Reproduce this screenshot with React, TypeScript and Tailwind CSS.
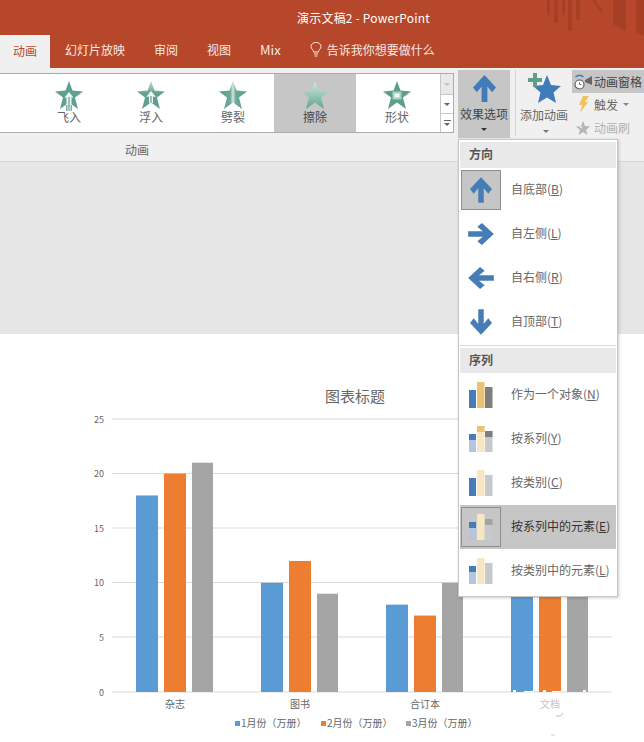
import React from "react";

const FONT = '"Noto Sans CJK SC", "Liberation Sans", sans-serif';
const STAR = "14,0 17.5,9.5 28,10.5 20,16.5 23,28 14,21.5 5,28 8,16.5 0,10.5 10.5,9.5";

function StarBase({ children }: { children?: React.ReactNode }) {
  return (
    <svg width="28" height="31" viewBox="0 0 28 31" className="block -mb-[2px]">
      {children}
    </svg>
  );
}

function StarFly() {
  return (
    <StarBase>
      <polygon points={STAR} fill="#5fa08e" />
      <path d="M14 11 L18.5 16.5 L16.5 16.5 L16.5 24 L11.5 24 L11.5 16.5 L9.5 16.5 Z" fill="#eef6f3" />
      <path d="M13.4 16 h1.2 v9 h-1.2z" fill="#5fa08e" />
      <path d="M11 24 h1.5 v6 h-1.5z M13.2 24 h1.5 v6 h-1.5z M15.5 24 h1.5 v6 h-1.5z" fill="#7fb3a4" />
    </StarBase>
  );
}
function StarFloat() {
  return (
    <StarBase>
      <defs>
        <linearGradient id="fl" x1="0" y1="0" x2="0" y2="1">
          <stop offset="0" stopColor="#c3dcd5" />
          <stop offset="0.45" stopColor="#62a190" />
          <stop offset="1" stopColor="#5d9e8c" />
        </linearGradient>
      </defs>
      <polygon points={STAR} fill="url(#fl)" />
      <path d="M14 10 L19 16 L16 15.5 L16 22 L12 22 L12 15.5 L9 16 Z" fill="#eef6f3" />
      <path d="M13.4 15 h1.2 v7 h-1.2z" fill="#5fa08e" />
    </StarBase>
  );
}
function StarSplit() {
  return (
    <StarBase>
      <defs>
        <linearGradient id="sp" x1="0" y1="0" x2="1" y2="0">
          <stop offset="0" stopColor="#5a9b89" />
          <stop offset="0.4" stopColor="#6ea898" />
          <stop offset="0.5" stopColor="#d4e6e1" />
          <stop offset="0.6" stopColor="#6ea898" />
          <stop offset="1" stopColor="#5a9b89" />
        </linearGradient>
      </defs>
      <polygon points={STAR} fill="url(#sp)" />
    </StarBase>
  );
}
function StarWipe() {
  return (
    <StarBase>
      <defs>
        <linearGradient id="wp" x1="0" y1="0" x2="0" y2="1">
          <stop offset="0" stopColor="#d2e6df" />
          <stop offset="0.5" stopColor="#98c8b9" />
          <stop offset="1" stopColor="#62a390" />
        </linearGradient>
      </defs>
      <polygon points={STAR} fill="url(#wp)" />
    </StarBase>
  );
}
function StarShape() {
  return (
    <StarBase>
      <polygon points={STAR} fill="#5d9f8d" />
      <rect x="9.5" y="10.5" width="9" height="8" fill="#a9cfc4" />
      <rect x="11.5" y="12.5" width="5" height="4" fill="#f2f8f6" />
    </StarBase>
  );
}

function Arrow({ className, w = 22, h = 26, color = "#477db6" }: { className?: string; w?: number; h?: number; color?: string }) {
  return (
    <svg width={w} height={h} viewBox="0 0 24 28" className={className}>
      <polygon points="12,0 24,13 20,18 15,12 15,28 9,28 9,12 4,18 0,13" fill={color} />
    </svg>
  );
}

function Caret({ color = "#555" }: { color?: string }) {
  return <span className="block w-0 h-0 border-x-[3px] border-x-transparent border-t-[3px]" style={{ borderTopColor: color }} />;
}

function SeqIcon({ kind }: { kind: number }) {
  const B = "#477db6", BL = "#b4c6de", T = "#e9c274", TL = "#f7e5c4", G = "#7e7e7e", GL = "#c6cacd";
  return (
    <svg width="24" height="27" viewBox="0 0 24 27" className="block">
      {kind === 0 && (
        <g>
          <rect x="0" y="8" width="7" height="18" fill={B} />
          <rect x="8" y="0" width="7.5" height="26" fill={T} />
          <rect x="16" y="5" width="7.5" height="21" fill={G} />
        </g>
      )}
      {kind === 1 && (
        <g>
          <rect x="0" y="8" width="7" height="18" fill={BL} />
          <rect x="0" y="8" width="7" height="6" fill={B} />
          <rect x="8" y="0" width="7.5" height="26" fill={TL} />
          <rect x="8" y="0" width="7.5" height="6" fill={T} />
          <rect x="16" y="5" width="7.5" height="21" fill={GL} />
          <rect x="16" y="5" width="7.5" height="6" fill={G} />
        </g>
      )}
      {kind === 2 && (
        <g>
          <rect x="0" y="8" width="7" height="18" fill={B} />
          <rect x="8" y="0" width="7.5" height="26" fill={TL} />
          <rect x="16" y="5" width="7.5" height="21" fill={GL} />
        </g>
      )}
      {kind === 3 && (
        <g>
          <rect x="0" y="8" width="7" height="18" fill={BL} />
          <rect x="0" y="8" width="7" height="6" fill={B} />
          <rect x="8" y="0" width="7.5" height="26" fill={TL} />
          <rect x="16" y="5" width="7.5" height="21" fill={GL} />
          <rect x="16" y="5" width="7.5" height="6" fill="#a2a2a2" />
        </g>
      )}
      {kind === 4 && (
        <g>
          <rect x="0" y="8" width="7" height="18" fill={BL} />
          <rect x="0" y="8" width="7" height="6" fill={B} />
          <rect x="8" y="0" width="7.5" height="26" fill={TL} />
          <rect x="16" y="5" width="7.5" height="21" fill={GL} />
        </g>
      )}
    </svg>
  );
}

function MenuItem({ icon, label, key2, selected, rowSel }: { icon: React.ReactNode; label: string; key2: string; selected?: boolean; rowSel?: boolean }) {
  return (
    <div className={`h-[44px] flex items-center pl-px ${rowSel ? "bg-[#c6c6c6] text-[#333]" : "text-[#666]"}`}>
      <div className={`w-[40px] h-[40px] flex items-center justify-center ${selected ? "bg-[#c6c6c6] border border-[#8e8e8e]" : ""}`}>{icon}</div>
      <span className="ml-[10px] -mt-[2px] text-[12px] leading-none whitespace-nowrap">
        {label}(<span className="underline">{key2}</span>)
      </span>
    </div>
  );
}

function GalleryItem({ star, label, selected }: { star: React.ReactNode; label: string; selected?: boolean }) {
  return (
    <div className={`w-[82px] h-full flex flex-col items-center pt-[7px] ${selected ? "bg-[#c6c6c6] text-[#444]" : "text-[#666]"}`}>
      {star}
      <span className="text-[12px] leading-[14px]">{label}</span>
    </div>
  );
}

function Chart() {
  const grid = [
    { l: "25", y: 419 },
    { l: "20", y: 473.5 },
    { l: "15", y: 528 },
    { l: "10", y: 582.5 },
    { l: "5", y: 637 },
    { l: "0", y: 692 },
  ];
  const top = 334;
  const unit = 10.92;
  const groups = [
    { x: 136, v: [18, 20, 21], n: "杂志" },
    { x: 261, v: [10, 12, 9], n: "图书" },
    { x: 386, v: [8, 7, 10], n: "合订本" },
    { x: 511, v: [14, 15, 12], n: "文档" },
  ];
  const colors = ["#5b9bd5", "#ed7d31", "#a5a5a5"];
  const legend = [
    { x: 235, c: colors[0], t: "1月份（万册）" },
    { x: 321, c: colors[1], t: "2月份（万册）" },
    { x: 406, c: colors[2], t: "3月份（万册）" },
  ];
  return (
    <svg width="644" height="408" viewBox={`0 ${top} 644 408`} className="block" style={{ fontFamily: FONT }}>
      <text x="355" y="402" fontSize="15" fill="#666" textAnchor="middle">图表标题</text>
      {grid.map((g) => (
        <g key={g.l}>
          <line x1="112" x2="612" y1={g.y} y2={g.y} stroke="#d9d9d9" strokeWidth="1" />
          <text x="104" y={g.y + 3.5} fontSize="9" fill="#666" textAnchor="end">{g.l}</text>
        </g>
      ))}
      {groups.map((g) => (
        <g key={g.n}>
          {g.v.map((v, i) => (
            <rect key={i} x={g.x + i * 28} y={692 - v * unit} width={i === 2 ? 21 : 22} height={v * unit} fill={colors[i]} />
          ))}
          <text x={g.x + 39} y="708" fontSize="10" fill={g.n === "文档" ? "#c4c4c4" : "#666"} textAnchor="middle">{g.n}</text>
        </g>
      ))}
      <g fill="#fff">
        <rect x="513" y="690" width="3" height="2" />
        <rect x="524" y="691" width="9" height="1" />
        <rect x="543" y="690" width="3" height="2" />
        <rect x="552" y="691" width="9" height="1" />
        <rect x="583" y="690" width="3" height="2" />
      </g>
      {legend.map((l) => (
        <g key={l.x}>
          <rect x={l.x} y="721" width="5" height="5" fill={l.c} />
          <text x={l.x + 6} y="727" fontSize="10" fill="#666">{l.t}</text>
        </g>
      ))}
      <path d="M556 716 q5 1 7 -3" stroke="#bbb" strokeWidth="1" fill="none" />
      <path d="M551 735 h4" stroke="#ccc" strokeWidth="1" fill="none" />
    </svg>
  );
}

export default function App() {
  return (
    <div className="relative w-[644px] h-[742px] overflow-hidden bg-white" style={{ fontFamily: FONT }}>
      {/* title bar + tabs */}
      <div className="relative h-[68px] bg-[#b7472a] text-white">
        <svg width="114" height="40" viewBox="0 0 114 40" className="absolute right-0 top-0">
          <g fill="#a63f24">
            <rect x="17" y="0" width="3" height="15" />
            <rect x="24" y="0" width="4" height="23" />
            <rect x="32" y="0" width="3" height="15" />
            <rect x="38" y="0" width="4" height="31" />
            <rect x="46" y="0" width="4" height="20" />
            <polygon points="62,0 65,0 72,10 72,14" />
            <polygon points="83,0 96,0 96,31 83,24" />
            <polygon points="106,0 114,0 114,36 106,32" />
          </g>
        </svg>
        <div className="relative h-[34px] flex items-center justify-center pl-[83px] text-[12px] leading-none pt-[1px]">
          <span className="tracking-[0.2px]">演示文稿2 - PowerPoint</span>
        </div>
        <div className="relative h-[34px] flex items-stretch text-[12px] text-[#f8e9e4]">
          <div className="w-[50px] mt-[1px] pb-[2px] bg-[#f0f0f0] text-[#b7472a] flex items-center justify-center">动画</div>
          <div className="px-[15px] pb-[3px] flex items-center">幻灯片放映</div>
          <div className="pl-[14px] pr-[14px] pb-[3px] flex items-center">审阅</div>
          <div className="pl-[15px] pr-[14px] pb-[3px] flex items-center">视图</div>
          <div className="pl-[15px] pr-[14px] pb-[3px] flex items-center text-[13px]">Mix</div>
          <div className="pl-[15px] pb-[3px] flex items-center gap-[5px]">
            <svg width="12" height="15" viewBox="0 0 12 15" fill="none" stroke="#f8e9e4" strokeWidth="1">
              <path d="M3.5 10 C3.5 7.5 1 7 1 4.6 A5 4.2 0 0 1 11 4.6 C11 7 8.5 7.5 8.5 10 Z" />
              <path d="M4 12 H8 M4.5 14 H7.5" />
            </svg>
            <span>告诉我你想要做什么</span>
          </div>
        </div>
      </div>

      {/* ribbon */}
      <div className="h-[94px] bg-[#f0f0f0] border-b border-[#d6d6d6] flex flex-col">
        <div className="h-[72px] flex items-start">
          <div className="mt-[5px] w-[454px] h-[60px] shrink-0 bg-white border-y border-r border-[#ababab] flex">
            <div className="w-[28px]" />
            <GalleryItem star={<StarFly />} label="飞入" />
            <GalleryItem star={<StarFloat />} label="浮入" />
            <GalleryItem star={<StarSplit />} label="劈裂" />
            <GalleryItem star={<StarWipe />} label="擦除" selected />
            <GalleryItem star={<StarShape />} label="形状" />
            <div className="w-[2px]" />
            <div className="flex-1 flex flex-col border-l border-[#c8c8c8]">
              <div className="h-[20px] bg-[#e9e9e9] flex items-center justify-center"><Caret color="#c4c4c4" /></div>
              <div className="h-[19px] border-t border-[#c8c8c8] flex items-center justify-center"><Caret color="#666" /></div>
              <div className="flex-1 border-t border-[#c8c8c8] flex flex-col items-center justify-center gap-[2px]">
                <span className="block w-[7px] h-px bg-[#666]" />
                <Caret color="#666" />
              </div>
            </div>
          </div>
          <div className="ml-[4px] mt-[2px] w-[52px] h-[68px] bg-[#c6c6c6] flex flex-col items-center pt-[5px] shrink-0">
            <Arrow w={23} h={27} color="#3f7cb9" />
            <span className="text-[12px] leading-[14px] mt-[5px] text-[#444] whitespace-nowrap">效果选项</span>
            <span className="mt-[7px]"><Caret color="#333" /></span>
          </div>
          <div className="ml-[5px] mt-[2px] h-[66px] w-px bg-[#d4d4d4] shrink-0" />
          <div className="ml-[2px] mr-[2px] mt-[2px] w-[52px] flex flex-col items-center shrink-0 relative">
            <svg width="36" height="30" viewBox="0 0 36 30" className="block mt-[3px] ml-[2px]">
              <polygon points="20,2 24,12 34,13 26.5,19.5 29,30 20,24.5 11,30 13.5,19.5 6,13 16,12" fill="#3f7cb9" />
              <path d="M6 0 h4 v5 h5 v4 h-5 v5 h-4 v-5 h-5 v-4 h5 z" fill="#5f9f8a" />
            </svg>
            <span className="text-[12px] leading-[14px] mt-[5px] text-[#666] whitespace-nowrap">添加动画</span>
            <span className="mt-[8px] ml-[3px]"><Caret color="#777" /></span>
          </div>
          <div className="mt-[2px] flex-1 flex flex-col text-[12px] leading-none">
            <div className="h-[23px] bg-[#c6c6c6] flex items-center pl-[1px] gap-[1px] text-[#444]">
              <svg width="20" height="18" viewBox="0 0 20 18" className="shrink-0">
                <path d="M2.5 4 Q6.5 0.5 10.5 4" stroke="#3f7cb9" strokeWidth="1.5" fill="none" />
                <circle cx="6.5" cy="11.5" r="4.5" fill="#fff" stroke="#555" strokeWidth="1.1" />
                <path d="M6.5 9 V11.5 H8.5" stroke="#3f7cb9" fill="none" strokeWidth="1" />
                <polygon points="12,7 19,3 19,12 12,9" fill="#666" />
              </svg>
              <span className="whitespace-nowrap">动画窗格</span>
            </div>
            <div className="h-[23px] flex items-center pl-[6px] gap-[5px] text-[#666]">
              <svg width="11" height="17" viewBox="0 0 11 17" className="shrink-0">
                <polygon points="5,0 11,0 7,6 10,6 2,17 4,9 1,9" fill="#f0c25e" />
              </svg>
              <span>触发</span>
              <Caret color="#888" />
            </div>
            <div className="h-[23px] flex items-center pl-[3px] gap-[3px] text-[#b0b0b0]">
              <svg width="16" height="15" viewBox="0 0 16 15" className="shrink-0">
                <polygon points="8,1 10,6 15,6.5 11,10 12.5,15 8,12 3.5,15 5,10 1,6.5 6,6" fill="#b5b5b5" />
                <path d="M1 3 L7 8" stroke="#f0f0f0" strokeWidth="1.5" />
              </svg>
              <span>动画刷</span>
            </div>
          </div>
        </div>
        <div className="flex-1 w-[274px] flex items-center justify-center text-[12px] text-[#666] pb-[2px]">动画</div>
      </div>

      {/* slide backdrop */}
      <div className="h-[172px] bg-[#e6e6e6]" />
      <Chart />

      {/* dropdown menu */}
      <div className="absolute left-[458px] top-[139px] w-[160px] h-[458px] bg-white border border-[#c6c6c6] shadow-[1px_1px_3px_rgba(0,0,0,0.2)] py-[2px] px-px">
        <div className="h-[26px] bg-[#e9e9e9] flex items-center pl-[9px] pb-[2px] text-[12px] font-bold text-[#555]">方向</div>
        <MenuItem selected label="自底部" key2="B" icon={<Arrow />} />
        <MenuItem label="自左侧" key2="L" icon={<Arrow className="rotate-90" />} />
        <MenuItem label="自右侧" key2="R" icon={<Arrow className="-rotate-90" />} />
        <MenuItem label="自顶部" key2="T" icon={<Arrow className="rotate-180" />} />
        <div className="h-[3px] mt-[1px] border-t border-[#d8d8d8]" />
        <div className="h-[25px] bg-[#e9e9e9] flex items-center pl-[9px] pb-[2px] text-[12px] font-bold text-[#555]">序列</div>
        <MenuItem label="作为一个对象" key2="N" icon={<SeqIcon kind={0} />} />
        <MenuItem label="按系列" key2="Y" icon={<SeqIcon kind={1} />} />
        <MenuItem label="按类别" key2="C" icon={<SeqIcon kind={2} />} />
        <MenuItem selected rowSel label="按系列中的元素" key2="E" icon={<SeqIcon kind={3} />} />
        <MenuItem label="按类别中的元素" key2="L" icon={<SeqIcon kind={4} />} />
      </div>
    </div>
  );
}
